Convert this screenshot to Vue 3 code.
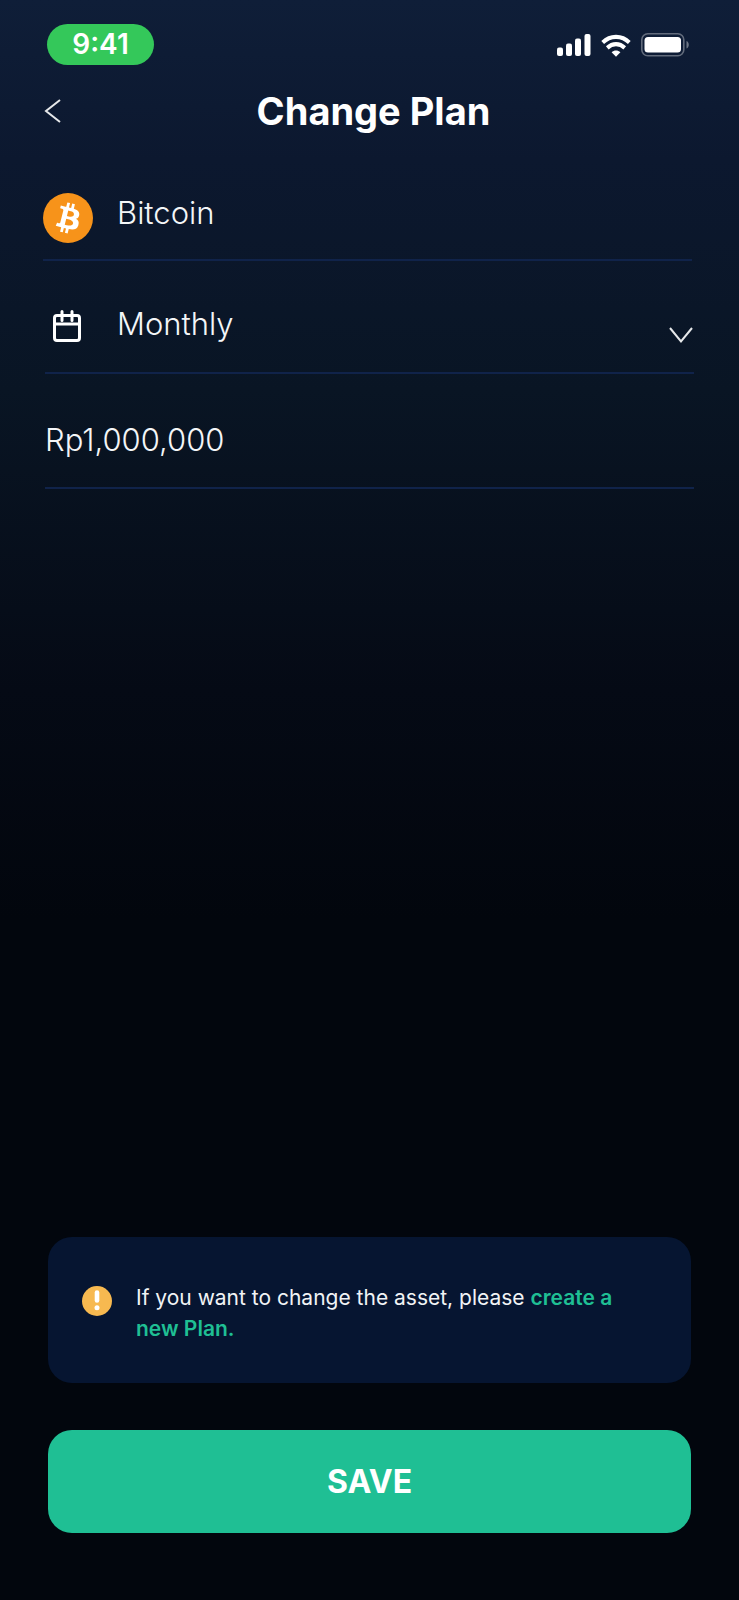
<script setup>
import { ref } from 'vue'

const frequency = ref('Monthly')
const amount = ref('Rp1,000,000')
</script>

<template>
  <main class="screen">
    <div class="status">
      <span class="clock">9:41</span>
      <div class="indicators">
        <svg width="34" height="22" viewBox="0 0 34 22" fill="#fff" aria-hidden="true">
          <rect x="0" y="13.500" width="6" height="8.500" rx="2" />
          <rect x="9" y="9.500" width="6" height="12.500" rx="2" />
          <rect x="18" y="4.500" width="6" height="17.500" rx="2" />
          <rect x="27.500" y="0" width="6" height="22" rx="2" />
        </svg>
        <svg width="30" height="23" viewBox="0 0 32 23" preserveAspectRatio="none" aria-hidden="true">
          <g fill="none" stroke="#fff" stroke-width="4.200">
            <path d="M1.800 8.600C9.800 .900 22.200 .900 30.200 8.600" />
            <path d="M6.700 13.900C12.200 8.900 19.800 8.900 25.300 13.900" />
          </g>
          <path d="M11.300 18.300C14 16 18 16 20.700 18.300L16 22.800Z" fill="#fff" />
        </svg>
        <svg width="48" height="24" viewBox="0 0 48 24" aria-hidden="true">
          <rect x=".8" y=".8" width="42" height="22" rx="6" fill="none" stroke="#fff" stroke-opacity=".35" stroke-width="1.600" />
          <rect x="3.500" y="4" width="36.500" height="15.500" rx="3.500" fill="#fff" />
          <path d="M45.500 8C48.500 9.200 48.500 14.400 45.500 15.600Z" fill="#fff" fill-opacity=".4" />
        </svg>
      </div>
    </div>

    <header class="header">
      <button class="back" type="button" aria-label="Back">
        <svg width="18" height="26" viewBox="0 0 18 26" fill="none" stroke="#e6e8ea" stroke-width="2" aria-hidden="true">
          <path d="M16 2L2 13L16 24" />
        </svg>
      </button>
      <h1 class="title">Change Plan</h1>
    </header>

    <form id="plan" class="fields" @submit.prevent>
      <div class="row asset">
        <svg class="coin" width="50" height="50" viewBox="0 0 32 32" aria-hidden="true">
          <circle cx="16" cy="16" r="16" fill="#f7931a" />
          <path fill="#fff" d="M23.189 14.020c.314-2.096-1.283-3.223-3.465-3.975l.708-2.840-1.728-.430-.690 2.765c-.454-.114-.920-.220-1.385-.326l.695-2.783L15.596 6l-.708 2.839c-.376-.086-.746-.170-1.104-.260l.002-.009-2.384-.595-.460 1.846s1.283.294 1.256.312c.700.175.826.638.805 1.006l-.806 3.235c.048.012.110.030.180.057l-.183-.045-1.130 4.532c-.086.212-.303.531-.793.410.018.025-1.256-.313-1.256-.313l-.858 1.978 2.250.561c.418.105.828.215 1.231.318l-.715 2.872 1.727.430.708-2.840c.472.127.930.245 1.378.357l-.706 2.828 1.728.430.715-2.866c2.948.558 5.164.333 6.097-2.333.752-2.146-.037-3.385-1.588-4.192 1.130-.260 1.980-1.003 2.207-2.538zm-3.950 5.538c-.533 2.147-4.148.986-5.320.695l.950-3.805c1.172.293 4.929.872 4.370 3.110zm.535-5.569c-.487 1.953-3.495.960-4.470.717l.860-3.450c.975.243 4.118.696 3.610 2.733z" />
        </svg>
        <span class="value">Bitcoin</span>
      </div>

      <div class="row schedule">
        <svg class="calendar" width="28" height="32" viewBox="0 0 28 32" fill="none" stroke="#fff" stroke-width="3" stroke-linecap="round" aria-hidden="true">
          <rect x="1.500" y="5.500" width="25" height="25" rx="2.500" />
          <path d="M1.500 14H26.500M9 1.500V10.500M19 1.500V10.500" />
        </svg>
        <select v-model="frequency" class="value control" aria-label="Frequency">
          <option>Daily</option>
          <option>Weekly</option>
          <option>Monthly</option>
        </select>
        <svg class="chevron" width="24" height="17" viewBox="0 0 24 17" fill="none" stroke="#e6e8ea" stroke-width="2" aria-hidden="true">
          <path d="M1 1L12 14.500L23 1" />
        </svg>
      </div>

      <div class="row amount">
        <input v-model="amount" class="value control" type="text" aria-label="Amount" />
      </div>
    </form>

    <footer class="footer">
      <aside class="notice">
        <svg class="alert" width="30" height="30" viewBox="0 0 30 30" aria-hidden="true">
          <circle cx="15" cy="15" r="15" fill="#f7b950" />
          <path d="M15 6.500V14.500" stroke="#fff" stroke-width="4.600" stroke-linecap="round" />
          <circle cx="15" cy="21.700" r="2.500" fill="#fff" />
        </svg>
        <p class="message">If you want to change the asset, please <a class="link" href="#new-plan">create a new Plan.</a></p>
      </aside>
      <button class="save" type="submit" form="plan">SAVE</button>
    </footer>
  </main>
</template>

<style>
body {
  margin: 0;
  background: #02060d;
}
</style>

<style scoped>
.screen {
  box-sizing: border-box;
  display: flex;
  flex-direction: column;
  min-height: 100vh;
  padding: 24px 0 67px;
  color: #fff;
  font-family: Inter, "Noto Sans", sans-serif;
  background: linear-gradient(180deg, #0f1e38 0, #0c182f 160px, #091524 390px, #050a15 690px, #02060d 920px);
}

.status {
  display: flex;
  align-items: center;
  justify-content: space-between;
  padding: 0 50px 0 47px;
}

.clock {
  width: 107px;
  border-radius: 21px;
  background: #34c85a;
  font-size: 28px;
  font-weight: 600;
  line-height: 41px;
  text-align: center;
}

.indicators {
  display: flex;
  align-items: center;
  gap: 10px;
  padding-top: 1px;
}

.header {
  display: grid;
  grid-template-columns: 24px 1fr 24px;
  align-items: center;
  margin-top: 22px;
  padding: 0 36px 0 44px;
}

.back {
  display: flex;
  padding: 0;
  border: 0;
  background: none;
  cursor: pointer;
}

.title {
  margin: 0;
  font-size: 38px;
  font-weight: 700;
  line-height: 48px;
  text-align: center;
}

.fields {
  display: flex;
  flex-direction: column;
  padding: 0 45px;
}

.row {
  display: flex;
  border-bottom: 2px solid #10234a;
}

.asset {
  gap: 24px;
  margin: 58px 2px 0 -2px;
  padding-bottom: 16px;
}

.schedule {
  position: relative;
  align-items: flex-start;
  padding: 43px 0 28px;
}

.calendar {
  margin: 6px 36px 0 8px;
}

.chevron {
  position: absolute;
  right: 1px;
  bottom: 28px;
  pointer-events: none;
}

.amount {
  padding: 46px 0 27px;
}

.value {
  font-size: 31px;
  font-weight: 300;
  line-height: 40px;
  color: #f4f6f8;
}

.control {
  flex: 1;
  min-width: 0;
  height: 40px;
  margin: 0;
  padding: 0;
  border: 0;
  outline: 0;
  appearance: none;
  background: none;
  font-family: inherit;
}

.footer {
  display: flex;
  flex-direction: column;
  gap: 47px;
  margin-top: auto;
  padding: 0 48px;
}

.notice {
  display: flex;
  align-items: flex-start;
  gap: 24px;
  padding: 45px 64px 39px 34px;
  border-radius: 24px;
  background: #061531;
}

.alert {
  flex: none;
  margin-top: 4px;
}

.message {
  margin: 0;
  font-size: 21px;
  font-weight: 400;
  line-height: 31px;
  color: #f1f3f5;
}

.link {
  color: #1fbf94;
  font-weight: 600;
  text-decoration: none;
}

.save {
  height: 103px;
  border: 0;
  border-radius: 24px;
  background: #1fbf94;
  color: #fff;
  font-family: inherit;
  font-size: 32px;
  font-weight: 700;
  cursor: pointer;
}
</style>
